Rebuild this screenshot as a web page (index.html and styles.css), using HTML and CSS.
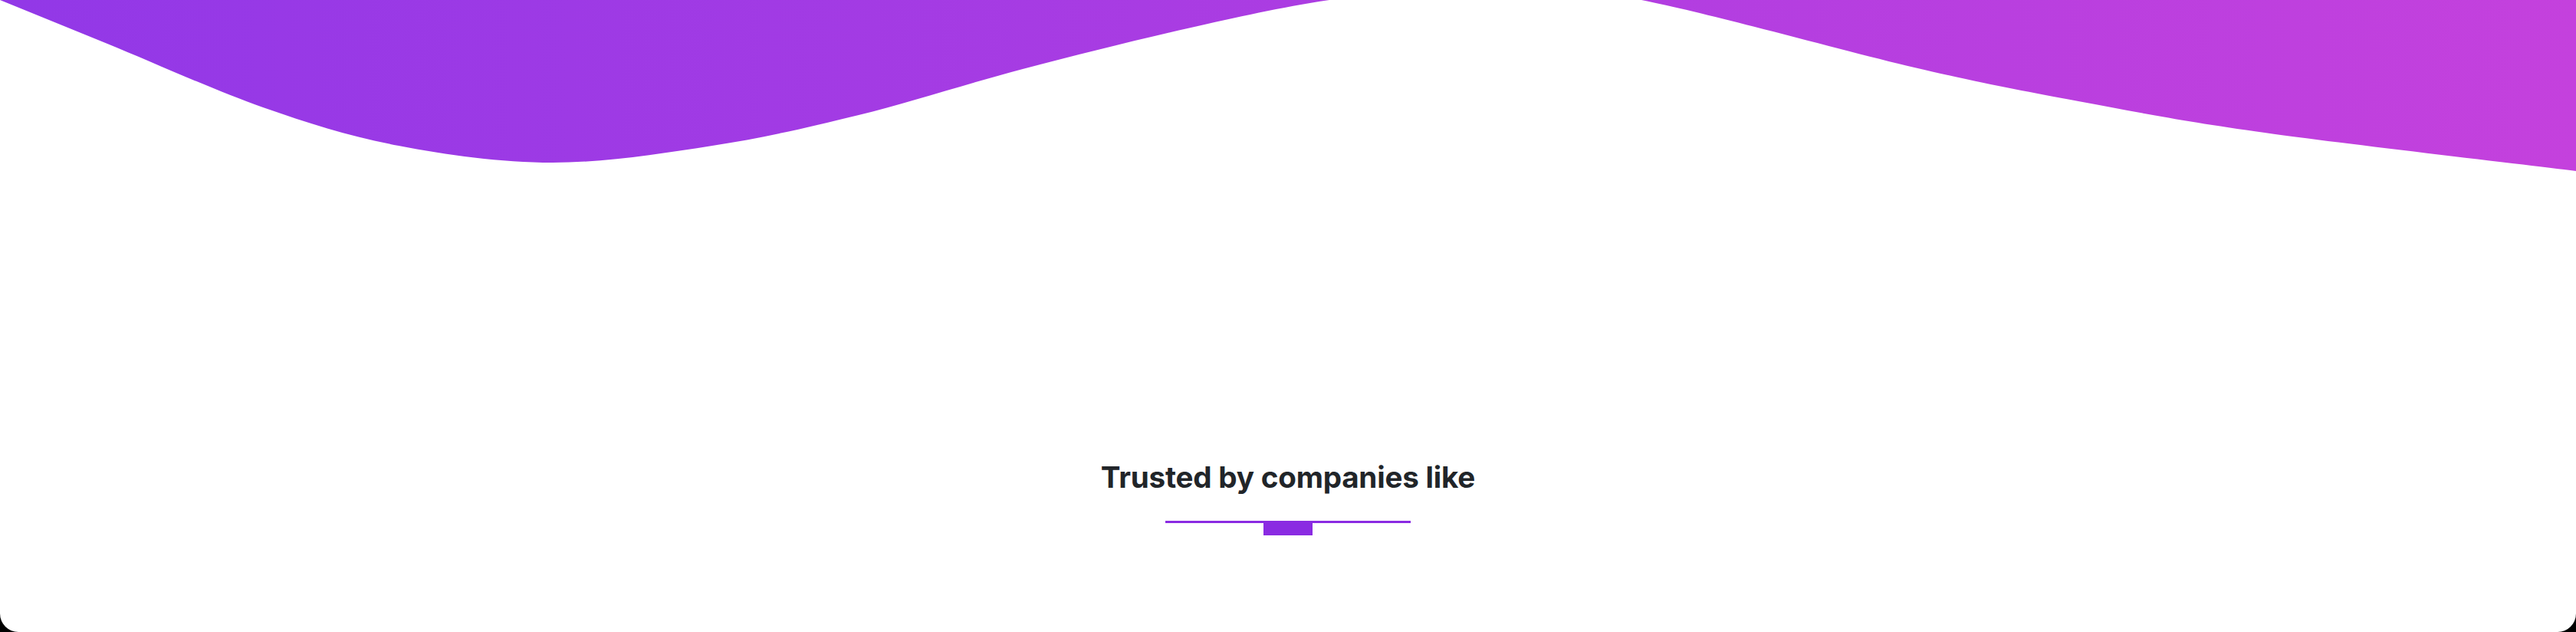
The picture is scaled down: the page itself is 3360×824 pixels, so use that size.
FILE: index.html
```html
<!DOCTYPE html>
<html lang="en">
<head>
<meta charset="utf-8">
<title>Trusted by companies like</title>
<link rel="stylesheet" href="styles.css">
</head>
<body>
<main class="card">
  <div class="wave">
    <svg class="wave-svg" viewBox="0 0 3360 224" preserveAspectRatio="none" aria-hidden="true">
      <defs>
        <linearGradient id="waveGrad" x1="0" y1="0" x2="1" y2="0">
          <stop offset="0" stop-color="#9238e7"/>
          <stop offset="1" stop-color="#c441dd"/>
        </linearGradient>
      </defs>
      <path fill="url(#waveGrad)" d="M0,0 L140,57 C197.2,80.3 279.7,117.8 343,140 C406.3,162.2 457,178 520,190 C583,202 652.8,212 721,212 C789.2,212 862.5,200.3 929,190 C995.5,179.7 1052.5,166.7 1120,150 C1187.5,133.3 1262.5,108.8 1334,90 C1405.5,71.2 1482.3,52 1549,37 C1615.7,22 1668.8,9.8 1734,0 C1799.2,-9.8 1872.2,-22 1940,-22 C2007.8,-22 2048.2,-18.3 2141,0 C2233.8,18.3 2402,66 2497,88 C2592,110 2634.8,117.8 2711,132 C2787.2,146.2 2845.8,157.8 2954,173 C3062.2,188.2 3292.3,214.7 3360,223 L3360,-60 L0,-60 Z"/>
    </svg>
  </div>
  <section class="trusted">
    <h2 class="trusted-title">Trusted by companies like</h2>
    <div class="divider"><span class="divider-block"></span></div>
  </section>
</main>
</body>
</html>
```
FILE: styles.css
```css
html, body {
  margin: 0;
  padding: 0;
  background: #000;
}

.card {
  height: 824px;
  background: #fff;
  border-radius: 0 0 24px 24px;
  overflow: hidden;
  display: flex;
  flex-direction: column;
}

.wave {
  height: 224px;
  flex: none;
}

.wave-svg {
  display: block;
  width: 100%;
  height: 224px;
}

.trusted {
  display: flex;
  flex-direction: column;
  align-items: center;
  padding-top: 375px;
}

.trusted-title {
  margin: 0;
  font-family: Inter, "Noto Sans", sans-serif;
  font-weight: 700;
  font-size: 38.6px;
  line-height: 1.2;
  color: #212529;
  letter-spacing: -0.2px;
}

.divider {
  margin-top: 34px;
  width: 320px;
  border-top: 3px solid #8a2be2;
  display: flex;
  justify-content: center;
}

.divider-block {
  width: 64px;
  height: 16px;
  background: #8a2be2;
}
```
